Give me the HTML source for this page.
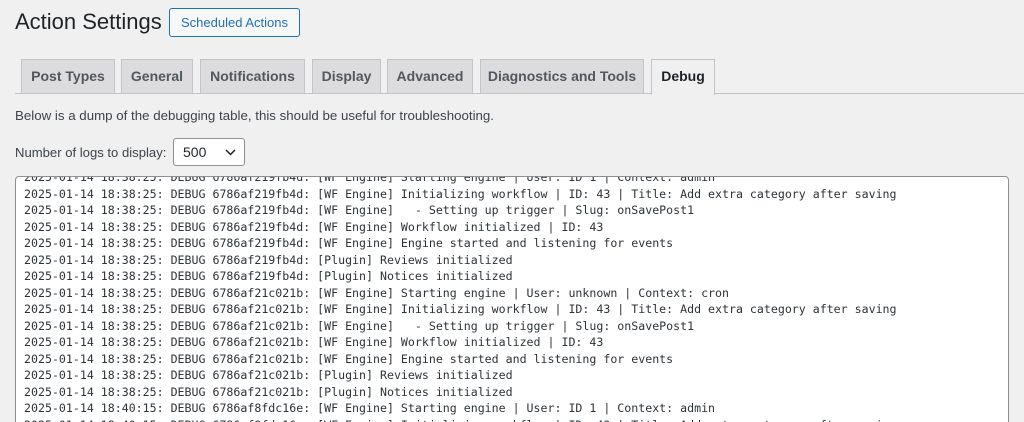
<!DOCTYPE html>
<html style="height:422px;overflow:hidden"><head><style>
body{margin:0;width:1024px;height:422px;overflow:hidden;background:#f0f0f1;font-family:"Liberation Sans",sans-serif;color:#1d2327;position:relative}
.h{position:absolute;left:15px;top:9px;font-size:22px;font-weight:400}
.btn{position:absolute;left:169px;top:8px;width:129px;height:27px;border:1px solid #2271b1;border-radius:3px;background:#f6f7f7;color:#2271b1;font-size:13px;line-height:27px;text-align:center}
.tabs{position:absolute;left:15px;right:0;top:93px;border-top:1px solid #c3c4c7}
.tab{position:absolute;top:59px;height:34px;background:#dcdcde;border:1px solid #c3c4c7;border-bottom:none;box-sizing:border-box;font-size:14px;font-weight:bold;color:#50575e;line-height:33px;text-align:center}
.tab.a{background:#f0f0f1;color:#1d2327;height:36px;z-index:2}
.p{position:absolute;left:15px;font-size:13.3px;color:#3c434a;white-space:nowrap}
.sel{position:absolute;left:173px;top:138px;width:72px;height:28px;box-sizing:border-box;border:1px solid #8c8f94;border-radius:3px;background:#fff;font-size:14px;line-height:26px;padding-left:9px}
.ta{position:absolute;left:15px;top:176px;width:994px;height:250px;border:1px solid #8c8f94;border-radius:4px;background:#fff;overflow:hidden;box-sizing:border-box}
pre{margin:0;position:absolute;left:8px;top:-8px;font-family:"DejaVu Sans Mono",monospace;font-size:11.6px;line-height:16.5px;color:#2c3338}
</style></head><body>
<div class="h">Action Settings</div>
<div class="btn">Scheduled Actions</div>
<div class="tabs"></div>
<div class="tab" style="left:21px;width:94px">Post Types</div>
<div class="tab" style="left:121px;width:72px">General</div>
<div class="tab" style="left:200px;width:105px">Notifications</div>
<div class="tab" style="left:312px;width:69px">Display</div>
<div class="tab" style="left:387px;width:86px">Advanced</div>
<div class="tab" style="left:480px;width:164px">Diagnostics and Tools</div>
<div class="tab a" style="left:651px;width:64px">Debug</div>
<div class="p" style="top:108px">Below is a dump of the debugging table, this should be useful for troubleshooting.</div>
<div class="p" style="top:145px;font-size:13.1px">Number of logs to display:</div>
<div class="sel">500<svg style="position:absolute;right:8px;top:10px" width="11" height="7" viewBox="0 0 11 7"><path d="M1 1l4.5 4.5L10 1" fill="none" stroke="#1d2327" stroke-width="1.5"/></svg></div>
<div class="ta"><pre>2025-01-14 18:38:25: DEBUG 6786af219fb4d: [WF Engine] Starting engine | User: ID 1 | Context: admin
2025-01-14 18:38:25: DEBUG 6786af219fb4d: [WF Engine] Initializing workflow | ID: 43 | Title: Add extra category after saving
2025-01-14 18:38:25: DEBUG 6786af219fb4d: [WF Engine]   - Setting up trigger | Slug: onSavePost1
2025-01-14 18:38:25: DEBUG 6786af219fb4d: [WF Engine] Workflow initialized | ID: 43
2025-01-14 18:38:25: DEBUG 6786af219fb4d: [WF Engine] Engine started and listening for events
2025-01-14 18:38:25: DEBUG 6786af219fb4d: [Plugin] Reviews initialized
2025-01-14 18:38:25: DEBUG 6786af219fb4d: [Plugin] Notices initialized
2025-01-14 18:38:25: DEBUG 6786af21c021b: [WF Engine] Starting engine | User: unknown | Context: cron
2025-01-14 18:38:25: DEBUG 6786af21c021b: [WF Engine] Initializing workflow | ID: 43 | Title: Add extra category after saving
2025-01-14 18:38:25: DEBUG 6786af21c021b: [WF Engine]   - Setting up trigger | Slug: onSavePost1
2025-01-14 18:38:25: DEBUG 6786af21c021b: [WF Engine] Workflow initialized | ID: 43
2025-01-14 18:38:25: DEBUG 6786af21c021b: [WF Engine] Engine started and listening for events
2025-01-14 18:38:25: DEBUG 6786af21c021b: [Plugin] Reviews initialized
2025-01-14 18:38:25: DEBUG 6786af21c021b: [Plugin] Notices initialized
2025-01-14 18:40:15: DEBUG 6786af8fdc16e: [WF Engine] Starting engine | User: ID 1 | Context: admin
2025-01-14 18:40:15: DEBUG 6786af8fdc16e: [WF Engine] Initializing workflow | ID: 43 | Title: Add extra category after saving</pre></div>
</body></html>
